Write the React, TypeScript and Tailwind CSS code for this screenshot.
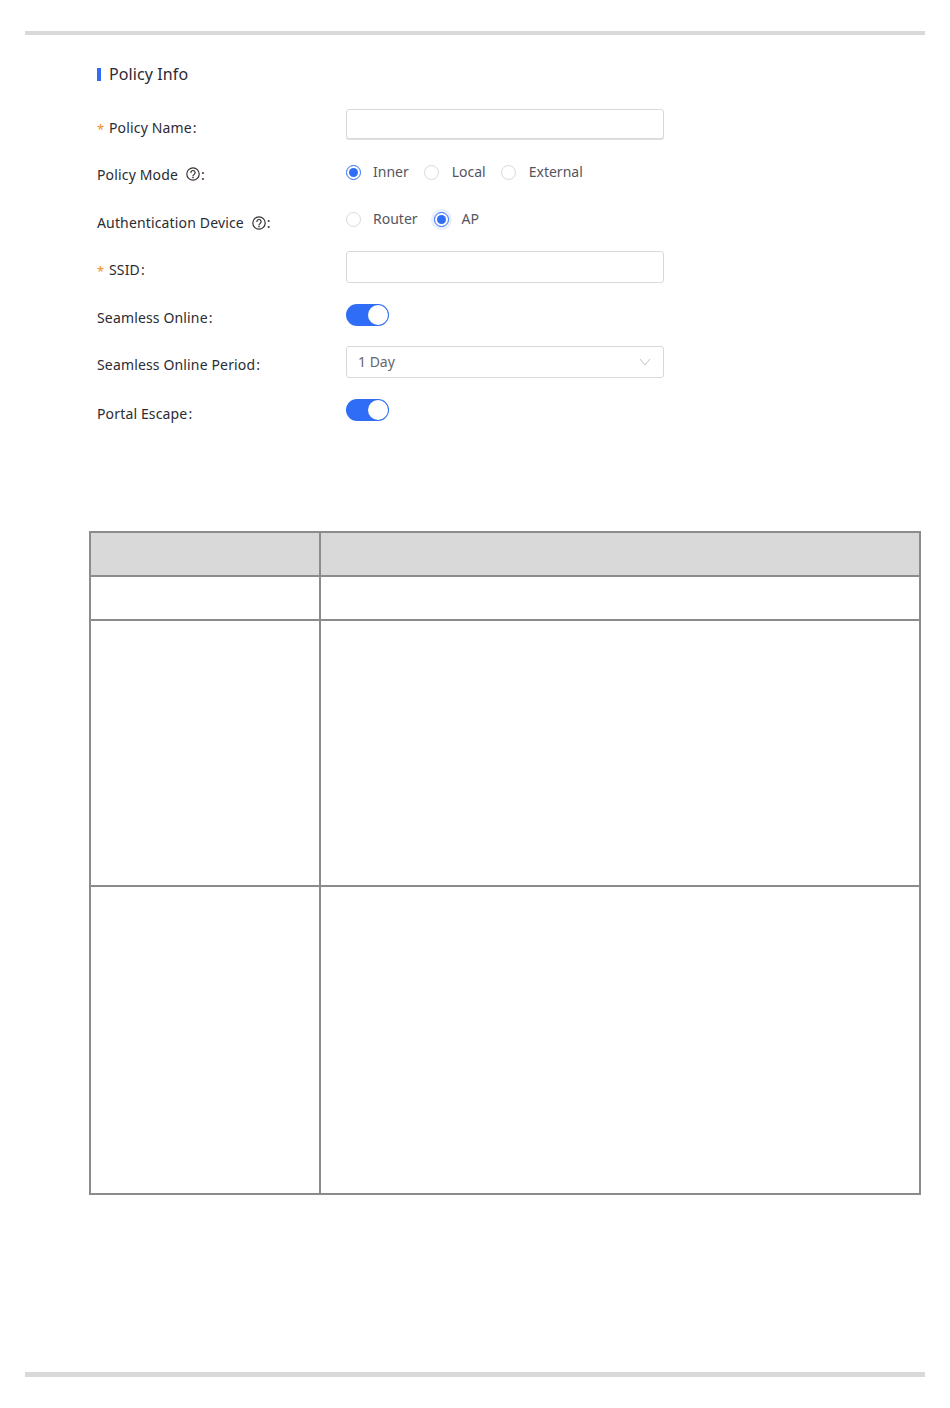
import type { ReactNode } from "react";

function HelpIcon() {
  return (
    <svg width="14" height="14" viewBox="0 0 14 14" fill="none" className="ml-[8px] shrink-0">
      <circle cx="7" cy="7" r="6.2" stroke="#333" strokeWidth="1.2" />
      <path
        d="M4.9 5.6a2.1 2.1 0 1 1 3.2 1.8c-.7.4-1.1.7-1.1 1.4"
        stroke="#333"
        strokeWidth="1.2"
        strokeLinecap="round"
      />
      <circle cx="7" cy="10.6" r=".8" fill="#333" />
    </svg>
  );
}

function Radio({
  label,
  checked,
  halo,
  wide,
}: {
  label: string;
  checked?: boolean;
  halo?: boolean;
  wide?: boolean;
}) {
  return (
    <div className="flex items-center">
      {checked ? (
        <span
          className={`flex h-[15px] w-[15px] items-center justify-center rounded-full border border-[#2f6df6] bg-white ${
            halo ? "shadow-[0_0_0_3px_#e8effe]" : ""
          }`}
        >
          <span className="h-[9px] w-[9px] rounded-full bg-[#2f6df6]" />
        </span>
      ) : (
        <span className="h-[15px] w-[15px] rounded-full border border-[#d9d9d9] bg-white" />
      )}
      <span className={`mb-[2px] text-[14px] text-[#55555f] ${wide ? "ml-[13px]" : "ml-[12px]"}`}>{label}</span>
    </div>
  );
}

function Toggle() {
  return (
    <div className="flex h-[22px] w-[43px] items-center justify-end rounded-full bg-[#2f6df6] pr-[1px]">
      <span className="h-[20px] w-[20px] rounded-full bg-white" />
    </div>
  );
}

function Row({
  label,
  required,
  help,
  height,
  labelTop = "mt-[6px]",
  children,
}: {
  label: string;
  required?: boolean;
  help?: boolean;
  height: string;
  labelTop?: string;
  children: ReactNode;
}) {
  return (
    <div className={`flex items-center ${height}`}>
      <div className={`flex w-[249px] items-center text-[14px] tracking-[0.15px] text-[#2b2b33] ${labelTop}`}>
        {required && <span className="w-[12px] pt-[5px] text-[13px] text-[#f28c1e]">*</span>}
        <span>{label}</span>
        {help && <HelpIcon />}
        <span className="ml-[1px]">:</span>
      </div>
      {children}
    </div>
  );
}

function InputBox({ className = "h-[32px]", children }: { className?: string; children?: ReactNode }) {
  return (
    <div
      className={`flex w-[318px] items-center justify-between rounded-[3px] border border-[#d9d9d9] bg-white pl-[11px] pr-[12px] text-[14px] text-[#66666e] ${className}`}
    >
      {children}
    </div>
  );
}

export default function App() {
  return (
    <div className="flex h-[1408px] w-[950px] flex-col bg-white font-['Noto_Sans',sans-serif]">
      <div className="mx-[25px] mt-[31px] h-[4px] shrink-0 bg-[#d9d9d9]" />

      {/* Policy form */}
      <div className="pl-[97px] pt-[30px]">
        <div className="flex h-[18px] items-center">
          <span className="h-[13px] w-[4px] bg-[#2f6df6]" />
          <span className="ml-[8px] text-[16px] tracking-[0.1px] text-[#2b2b33]">Policy Info</span>
        </div>
        <div className="mt-[17px]">
          <Row label="Policy Name" required height="h-[48px]">
            <InputBox className="h-[30px] shadow-[0_1px_0_#e0e0e0]" />
          </Row>
          <Row label="Policy Mode" help height="h-[48px]" labelTop="mt-[4px]">
            <div className="flex items-center gap-[15px]">
              <Radio label="Inner" checked />
              <Radio label="Local" wide />
              <Radio label="External" wide />
            </div>
          </Row>
          <Row label="Authentication Device" help height="h-[47px]">
            <div className="flex items-center gap-[16px]">
              <Radio label="Router" />
              <Radio label="AP" checked halo wide />
            </div>
          </Row>
          <Row label="SSID" required height="h-[48px]" labelTop="mt-[4px]">
            <InputBox />
          </Row>
          <Row label="Seamless Online" height="h-[48px]" labelTop="mt-[4px]">
            <Toggle />
          </Row>
          <Row label="Seamless Online Period" height="h-[46px]" labelTop="mt-[4px]">
            <InputBox>
              <span className="mb-[2px]">1 Day</span>
              <svg width="12" height="8" viewBox="0 0 12 8" fill="none">
                <path d="M1 1l5 6 5-6" stroke="#c4c4c4" strokeWidth="1" />
              </svg>
            </InputBox>
          </Row>
          <Row label="Portal Escape" height="h-[50px]">
            <Toggle />
          </Row>
        </div>
      </div>

      {/* Empty table */}
      <table className="ml-[89px] mt-[96px] h-[663px] w-[832px] table-fixed border-collapse border-2 border-[#8c8c8c]">
        <tbody>
          <tr className="h-[44px] bg-[#d9d9d9]">
            <td className="w-[230px] border-2 border-[#8c8c8c]" />
            <td className="border-2 border-[#8c8c8c]" />
          </tr>
          <tr className="h-[44px]">
            <td className="border-2 border-[#8c8c8c]" />
            <td className="border-2 border-[#8c8c8c]" />
          </tr>
          <tr className="h-[266px]">
            <td className="border-2 border-[#8c8c8c]" />
            <td className="border-2 border-[#8c8c8c]" />
          </tr>
          <tr className="h-[308px]">
            <td className="border-2 border-[#8c8c8c]" />
            <td className="border-2 border-[#8c8c8c]" />
          </tr>
        </tbody>
      </table>

      <div className="mx-[25px] mt-auto mb-[31px] h-[5px] shrink-0 bg-[#d9d9d9]" />
    </div>
  );
}
